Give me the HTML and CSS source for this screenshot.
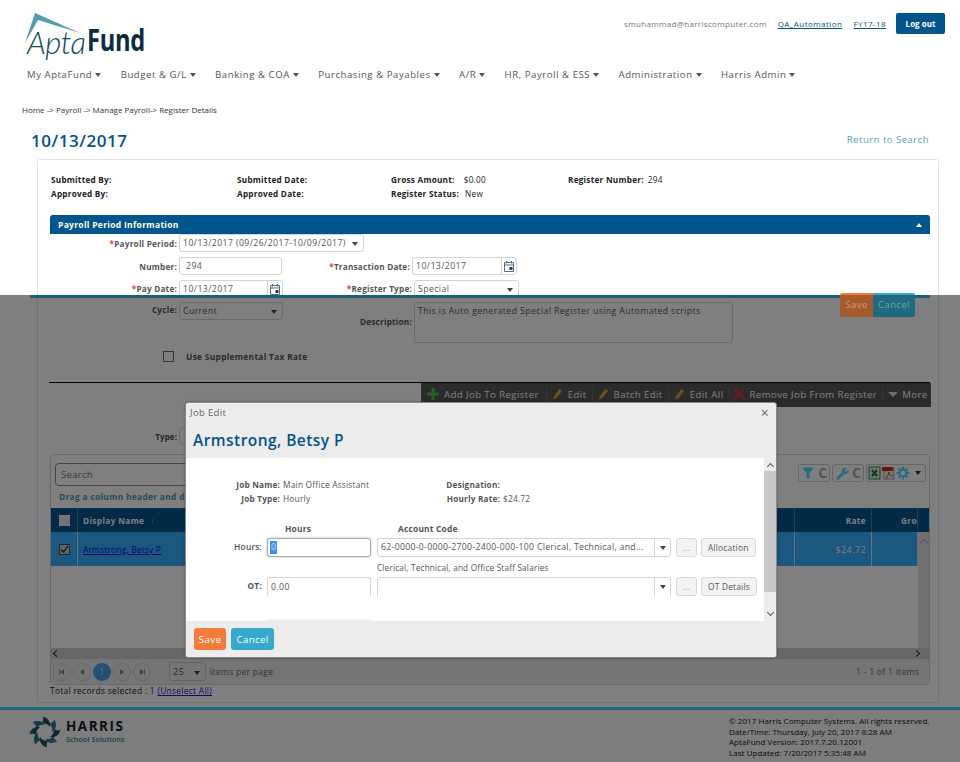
FILE: index.html
```html
<!DOCTYPE html>
<html lang="en">
<head>
<meta charset="utf-8">
<title>Register Details</title>
<link rel="stylesheet" href="styles.css">
</head>
<body>
<div class="page">
  <header class="top">
    <div class="logo">
      <svg class="roof" width="60" height="36" viewBox="0 0 60 36"><path d="M1 32 L11 2 L56 22 L14 9 Z" fill="#4f9fb0"/></svg>
      <span class="apta">Apta</span><span class="fund">Fund</span>
    </div>
    <div class="account">
      <span class="email">smuhammad@harriscomputer.com</span>
      <a class="acct-link">QA_Automation</a>
      <a class="acct-link">FY17-18</a>
      <button class="logout">Log out</button>
    </div>
  </header>
  <nav class="nav">
    <span class="nav-item">My AptaFund<i class="caret"></i></span>
    <span class="nav-item">Budget &amp; G/L<i class="caret"></i></span>
    <span class="nav-item">Banking &amp; COA<i class="caret"></i></span>
    <span class="nav-item">Purchasing &amp; Payables<i class="caret"></i></span>
    <span class="nav-item">A/R<i class="caret"></i></span>
    <span class="nav-item">HR, Payroll &amp; ESS<i class="caret"></i></span>
    <span class="nav-item">Administration<i class="caret"></i></span>
    <span class="nav-item">Harris Admin<i class="caret"></i></span>
  </nav>
  <div class="crumbs">Home -&gt; Payroll -&gt; Manage Payroll-&gt; Register Details</div>
  <div class="title-row">
    <h1>10/13/2017</h1>
    <a class="return">Return to Search</a>
  </div>

  <main class="card">
    <div class="summary">
      <div><b>Submitted By:</b></div>
      <div><b>Submitted Date:</b></div>
      <div><b>Gross Amount:</b><span class="val gross">$0.00</span></div>
      <div><b>Register Number:</b><span class="val">294</span></div>
      <div><b>Approved By:</b></div>
      <div><b>Approved Date:</b></div>
      <div><b>Register Status:</b><span class="val status">New</span></div>
      <div></div>
    </div>
    <div class="section-head"><span>Payroll Period Information</span><i class="caret-up"></i></div>

    <div class="frow r1">
      <label><em>*</em>Payroll Period:</label>
      <div class="select w185 wide">10/13/2017 (09/26/2017-10/09/2017)<i class="caret dark"></i></div>
    </div>
    <div class="frow r2">
      <label>Number:</label>
      <div class="input w103 pad">294</div>
      <label><em>*</em>Transaction Date:</label>
      <div class="date w105">10/13/2017<span class="cal"><svg width="12" height="12" viewBox="0 0 12 12"><path d="M1.5 2.5h9v9h-9z M1.5 5h9" fill="none" stroke="#4f6f85"/><path d="M3.5 1v2.5M8.5 1v2.5" stroke="#4f6f85"/><rect x="6.5" y="7" width="3" height="3" fill="#335"/></svg></span></div>
    </div>
    <div class="frow r3">
      <label><em>*</em>Pay Date:</label>
      <div class="date w104">10/13/2017<span class="cal"><svg width="12" height="12" viewBox="0 0 12 12"><path d="M1.5 2.5h9v9h-9z M1.5 5h9" fill="none" stroke="#4f6f85"/><path d="M3.5 1v2.5M8.5 1v2.5" stroke="#4f6f85"/><rect x="6.5" y="7" width="3" height="3" fill="#335"/></svg></span></div>
      <label class="lbl-rt"><em>*</em>Register Type:</label>
      <div class="select w105 shift">Special<i class="caret dark"></i></div>
    </div>
    <div class="frow r4">
      <label>Cycle:</label>
      <div class="select w104">Current<i class="caret dark"></i></div>
      <label class="lbl-desc">Description:</label>
      <div class="textarea shift">This is Auto generated Special Register using Automated scripts</div>
    </div>
    <div class="supp"><span class="check"></span><b>Use Supplemental Tax Rate</b></div>

    <div class="rule"></div>
    <div class="toolbar-wrap">
      <div class="toolbar">
        <span class="tb first"><svg width="12" height="12" viewBox="0 0 12 12"><path d="M4.500 0h3v4.500h4.500v3h-4.500v4.500h-3v-4.500h-4.500v-3h4.500z" fill="#4fc04f"/></svg>Add Job To Register</span>
        <span class="tb"><svg class="pencil" width="11" height="12" viewBox="0 0 11 12"><path d="M1 11.500l1-3.500 5.500-7 2.500 2-5.500 7z" fill="#e0a040"/></svg>Edit</span>
        <span class="tb"><svg class="pencil" width="11" height="12" viewBox="0 0 11 12"><path d="M1 11.500l1-3.500 5.500-7 2.500 2-5.500 7z" fill="#e0a040"/></svg>Batch Edit</span>
        <span class="tb near"><svg class="pencil" width="11" height="12" viewBox="0 0 11 12"><path d="M1 11.500l1-3.500 5.500-7 2.500 2-5.500 7z" fill="#e0a040"/></svg>Edit All</span>
        <span class="tb"><svg width="12" height="12" viewBox="0 0 12 12"><path d="M1 1l10 10M11 1L1 11" stroke="#f02848" stroke-width="2"/></svg>Remove Job From Register</span>
        <span class="tb last"><i class="caret big"></i>More</span>
      </div>
    </div>

    <div class="type-row"><label>Type:</label><div class="select w104"></div></div>

    <section class="grid">
      <div class="grid-tools">
        <div class="search">Search</div>
        <div class="tool-groups">
          <span class="tg"><svg width="14" height="14" viewBox="0 0 14 14"><path d="M1 1.500h12l-4.500 5.500v6l-3-1.500v-4.500z" fill="#50d8ff"/></svg><span class="redo">C</span></span>
          <span class="tg"><svg width="14" height="14" viewBox="0 0 14 14"><path d="M1 12l6-6c-1-3 2-5 5-4l-2.500 2.500 1.500 1.500 2.500-2.500c.5 3-2 5.500-4.500 4.500l-6 6z" fill="#50d8ff"/></svg><span class="redo">C</span></span>
          <span class="tg tight"><svg width="13" height="14" viewBox="0 0 13 14"><rect x="1" y="1" width="11" height="12" fill="#d8ecd8" stroke="#2a8a4a"/><path d="M4 4l5 6M9 4l-5 6" stroke="#1a7a3a" stroke-width="2"/></svg><svg class="pdf" width="13" height="14" viewBox="0 0 13 14"><rect x="2" y="2" width="10" height="11" fill="#eee" stroke="#999"/><rect x="0" y="1" width="11" height="4" fill="#e02020"/><path d="M4 12c2-3 3-4 3-6 0 3 2 4 4 4" fill="none" stroke="#d03030"/></svg><svg width="14" height="14" viewBox="0 0 14 14"><circle cx="7" cy="7" r="3.500" fill="none" stroke="#50d8ff" stroke-width="2.400"/><path d="M7 .5v3M7 10.500v3M.5 7h3M10.500 7h3M2.400 2.400l2.100 2.100M9.500 9.500l2.100 2.100M11.600 2.400l-2.100 2.100M4.500 9.500l-2.100 2.100" stroke="#50d8ff" stroke-width="2"/></svg><i class="caret navy"></i></span>
        </div>
      </div>
      <div class="hint">Drag a column header and dr</div>
      <div class="ghead">
        <div class="gc cb"><span class="check light"></span></div>
        <div class="gc name">Display Name <span class="arrow">↑</span></div>
        <div class="gc num">Rate</div>
        <div class="gc clip">Gross</div>
        <div class="gc"></div>
      </div>
      <div class="gbody">
        <div class="gmain">
          <div class="grow">
            <div class="gc cb"><span class="check on"><svg width="9" height="9" viewBox="0 0 9 9"><path d="M1 4.500l2.500 2.500 4.500-6" fill="none" stroke="#333" stroke-width="1.300"/></svg></span></div>
            <div class="gc name"><a class="emp">Armstrong, Betsy P</a></div>
            <div class="gc num">$24.72</div>
            <div class="gc"></div>
          </div>
        </div>
        <div class="vscroll"><span class="chev up"></span></div>
      </div>
      <div class="hscroll"><span class="hl"></span><span class="hr"></span></div>
      <div class="pager">
        <span class="pg"><i class="tri l bar"></i></span>
        <span class="pg"><i class="tri l"></i></span>
        <span class="pg active">1</span>
        <span class="pg"><i class="tri r"></i></span>
        <span class="pg"><i class="tri r bar"></i></span>
        <div class="psize">25<i class="caret dark"></i></div>
        <span class="ptext">items per page</span>
        <span class="pcount">1 - 1 of 1 items</span>
      </div>
    </section>
    <div class="total">Total records selected : 1 <a>(Unselect All)</a></div>
  </main>

  <footer class="foot">
    <div class="hlogo">
      <svg width="32" height="32" viewBox="-16 -16 32 32">
        <defs><path id="blade" d="M-2 -15.500 C3 -14 6 -10 5 -5 C3 -8 0 -9 -3 -9 C-1.500 -11 -1.500 -13 -2 -15.500Z"/></defs>
        <g fill="#1f4f5c"><use href="#blade"/><use href="#blade" transform="rotate(90)"/><use href="#blade" transform="rotate(180)"/><use href="#blade" transform="rotate(270)"/></g>
        <g fill="#27788a"><use href="#blade" transform="rotate(45)"/><use href="#blade" transform="rotate(135)"/><use href="#blade" transform="rotate(225)"/><use href="#blade" transform="rotate(315)"/></g>
      </svg>
      <div class="hwords"><b>HARRIS</b><span>School Solutions</span></div>
    </div>
    <div class="legal">
      <div>© 2017 Harris Computer Systems. All rights reserved.</div>
      <div>Date/Time: Thursday, July 20, 2017 8:28 AM</div>
      <div>AptaFund Version: 2017.7.20.12001</div>
      <div>Last Updated: 7/20/2017 5:35:48 AM</div>
    </div>
  </footer>

  <div class="overlay"></div>
  <div class="stick-bar"></div>
  <div class="stick-btns"><span class="sb-save">Save</span><span class="sb-cancel">Cancel</span></div>

  <div class="modal">
    <div class="m-head">
      <div class="m-title"><span>Job Edit</span><span class="close">×</span></div>
      <h2>Armstrong, Betsy P</h2>
    </div>
    <div class="m-body">
      <div class="m-content">
        <div class="info">
          <b>Job Name:</b><span>Main Office Assistant</span><b>Designation:</b><span></span>
          <b>Job Type:</b><span>Hourly</span><b>Hourly Rate:</b><span>$24.72</span>
        </div>
        <div class="alloc heads">
          <span></span><b class="ctr">Hours</b><b class="acct">Account Code</b>
        </div>
        <div class="alloc">
          <label>Hours:</label>
          <div class="input focus"><span class="sel">0</span></div>
          <div class="combo"><span class="ctext">62-0000-0-0000-2700-2400-000-100 Clerical, Technical, and...</span><span class="cbtn"><i class="caret dark"></i></span></div>
          <span class="mbtn dots">...</span>
          <span class="mbtn wide-btn">Allocation</span>
        </div>
        <div class="acct-desc">Clerical, Technical, and Office Staff Salaries</div>
        <div class="alloc">
          <label class="ot">OT:</label>
          <div class="input cut">0.00</div>
          <div class="combo cut-c"><span class="ctext"></span><span class="cbtn"><i class="caret dark"></i></span></div>
          <span class="mbtn dots">...</span>
          <span class="mbtn wide-btn">OT Details</span>
        </div>
        <div class="next-input"></div>
      </div>
      <div class="m-scroll">
        <span class="chev up dark"></span>
        <span class="thumb"></span>
        <span class="chev down dark"></span>
      </div>
    </div>
    <div class="m-foot">
      <button class="save">Save</button>
      <button class="cancel">Cancel</button>
    </div>
  </div>
</div>
</body>
</html>
```

FILE: styles.css
```css
* { box-sizing: border-box; }
html, body { margin: 0; padding: 0; background: #fff; }
body { font-family: "Open Sans", "Liberation Sans", sans-serif; font-size: 9px; color: #333; }
.page { position: relative; width: 960px; height: 762px; overflow: hidden; }
b { font-weight: 700; }
i { font-style: normal; }
a { cursor: pointer; }

.top { display: flex; justify-content: space-between; height: 64px; }
.logo { position: relative; margin: 25px 0 0 27px; height: 32px; display: flex; align-items: flex-end; color: #0a2c3e; line-height: 30px; }
.roof { position: absolute; left: -3px; top: -14px; }
.apta { font-family: Lato, sans-serif; font-style: italic; font-weight: 300; font-size: 31px; color: #0c4a5c; letter-spacing: -.5px; }
.fund { display: inline-block; font-family: "Open Sans", sans-serif; font-weight: 700; font-size: 30px; margin-left: 1px; letter-spacing: -.4px; position: relative; top: -2px; transform: scaleX(.79); transform-origin: left center; }
.account { display: flex; align-items: center; height: 21px; margin: 13px 15px 0 0; font-size: 8px; }
.email { color: #777; letter-spacing: .34px; }
.acct-link { margin-left: 11px; color: #00558c; text-decoration: underline; letter-spacing: .45px; }
.logout { margin-left: 10px; width: 49px; height: 21px; padding: 0; border: 0; border-radius: 2px; background: #00558c; color: #fff; font: 700 8px "Open Sans", sans-serif; }

.nav { display: flex; padding-left: 27px; height: 20px; align-items: center; font-size: 9.600px; color: #555; letter-spacing: .55px; }
.nav-item { margin-right: 19.400px; white-space: nowrap; }
.caret { display: inline-block; width: 0; height: 0; margin-left: 3px; vertical-align: 1px; border: 3px solid transparent; border-top: 4px solid #555; border-bottom: 0; }
.caret.dark { border-top-color: #444; }
.caret.navy { border-top-color: #334; margin: 0 3px 0 4px; }
.caret.big { border-width: 5px 5px 0; border-top-color: #ddd; margin: 0 2px 0 0; vertical-align: 0; }
.crumbs { margin-top: 20px; padding-left: 22px; height: 12px; line-height: 12px; font-size: 8px; color: #333; }
.title-row { display: flex; justify-content: space-between; padding: 13px 31px 0; height: 43px; }
h1 { margin: 0; font-size: 17px; line-height: 23px; font-weight: 600; color: #00558c; letter-spacing: .55px; }
.return { margin-top: 4px; font-size: 9.600px; line-height: 14px; color: #4aa6c6; letter-spacing: .45px; }

.card { width: 902px; height: 544px; margin-left: 37px; padding: 0 8px 0 12px; border: 1px solid #e2e2e2; border-radius: 3px; }
.summary { display: grid; grid-template-columns: 186px 154px 177px 1fr; grid-auto-rows: 14px; margin: 13px 0 0 1px; font-size: 8.200px; line-height: 14px; color: #222; }
.summary b { letter-spacing: .25px; }
.val { margin-left: 4px; letter-spacing: .3px; }
.val.gross { margin-left: 9px; }
.val.status { margin-left: 6px; }
.section-head { display: flex; justify-content: space-between; align-items: center; width: 880px; height: 19px; margin-top: 14px; padding: 0 8px; border-radius: 3px 3px 0 0; background: #00558c; color: #fff; font-weight: 700; font-size: 8.500px; letter-spacing: .3px; }
.caret-up { width: 0; height: 0; border: 3px solid transparent; border-bottom: 4px solid #fff; border-top: 0; }

.frow { display: grid; grid-template-columns: 127px 131px 102px 1fr; column-gap: 0; align-items: center; }
.frow label { text-align: right; font-weight: 700; font-size: 8.200px; color: #555; letter-spacing: .22px; white-space: nowrap; }
.frow label em { font-style: normal; color: #e8403a; }
.r1 { height: 18px; margin-top: 0; }
.r2 { height: 18px; margin-top: 5px; }
.r3 { height: 19px; margin-top: 4px; }
.r4 { height: 41px; margin-top: 4px; align-items: start; }
.frow > div { margin-left: 2px; }
.select, .input, .date, .textarea, .psize { position: relative; height: 18px; line-height: 17px; border: 1px solid #d4d4d4; border-radius: 3px; background: #fff; font-size: 8.700px; color: #555; padding-left: 3px; letter-spacing: .42px; white-space: nowrap; }
.r1 .select { grid-column: 2 / 4; }
.select .caret { position: absolute; right: 5px; top: 7px; margin: 0; }
.w185 { width: 185px; }
.w103 { width: 103px; }
.w104 { width: 104px; }
.w105 { width: 105px; }
.pad { padding-left: 6px; }
.date .cal { position: absolute; right: 0; top: 0; bottom: 0; width: 15px; display: flex; align-items: center; justify-content: center; border-left: 1px solid #d4d4d4; }
.frow > .shift { margin-left: 4px; }
.frow .lbl-rt { margin-right: -2px; }
.frow .lbl-desc { margin: 14px -2px 0 0; }
.r4 label:first-child { margin-top: 2px; }
.textarea { width: 319px; height: 41px; }
.supp { display: flex; align-items: center; height: 12px; margin: 7px 0 0 113px; font-size: 8.400px; color: #555; letter-spacing: .3px; }
.check { display: inline-flex; align-items: center; justify-content: center; width: 11px; height: 11px; margin-right: 12px; border: 1px solid #666; background: #fff; }
.rule { width: 881px; height: 1px; margin: 20px 0 0 -1px; background: #000; }
.toolbar-wrap { display: flex; justify-content: flex-end; margin-right: -1px; }
.toolbar { display: flex; align-items: center; width: 510px; height: 24px; background: #565656; color: #fff; font-size: 9.600px; letter-spacing: .42px; padding-left: 6px; }
.tb { display: flex; align-items: center; gap: 5px; height: 100%; padding: 0 6px 2px 0; margin-right: 5px; position: relative; white-space: nowrap; }
.tb.first { padding-right: 8px; }
.tb.near { margin-right: 3px; }
.tb::after { content: ""; position: absolute; right: 0; top: 4px; bottom: 4px; width: 1px; background: #6c6c6c; }
.tb.last::after { display: none; }
.tb.last { gap: 2px; }

.type-row { display: grid; grid-template-columns: 127px 1fr; margin-top: 20px; height: 18px; align-items: center; }
.type-row label { text-align: right; font-weight: 700; font-size: 8.200px; color: #555; }
.type-row .select { margin-left: 2px; }
.grid { width: 880px; height: 231px; margin-top: 9px; border: 1px solid #d0d0d0; border-radius: 4px; display: flex; flex-direction: column; }
.grid-tools { display: flex; justify-content: space-between; height: 35px; padding: 8px 3px 0 4px; }
.search { width: 200px; height: 23px; line-height: 21px; padding-left: 5px; border: 1px solid #888; border-radius: 4px; font-size: 9.500px; color: #777; letter-spacing: .3px; }
.tool-groups { display: flex; gap: 2px; height: 18px; margin-top: 1px; }
.tg { display: flex; align-items: center; gap: 3px; padding: 0 2px; border: 1px solid #ccc; border-radius: 3px; }
.tg.tight { gap: 1px; padding: 0 1px; }
.redo { font-size: 14px; line-height: 14px; font-weight: 700; color: #aaa; }
.hint { height: 18px; padding-left: 8px; line-height: 13px; font-weight: 700; color: #4a94b8; font-size: 8.300px; letter-spacing: .35px; white-space: nowrap; }
.ghead, .grow { display: grid; grid-template-columns: 27px 717px 77px 46px 1fr; }
.grow { grid-template-columns: 27px 717px 77px 46px; height: 34px; background: #36aeff; color: #fff; }
.ghead { height: 24px; background: #00558c; color: #fff; font-weight: 700; font-size: 8.200px; letter-spacing: .4px; border-top: 1px solid #0a6aa0; }
.gc { display: flex; align-items: center; padding: 0 5px; border-right: 1px solid #3d80a8; overflow: hidden; white-space: nowrap; }
.grow .gc { border-right-color: #cfe4f4; font-size: 9px; letter-spacing: .4px; }
.gc.cb { justify-content: center; padding: 0; }
.gc.cb .check { margin: 0; }
.gc.num { justify-content: flex-end; }
.gc.clip { padding-left: 29px; padding-right: 0; }
.ghead .gc:last-child { border: 0; }
.arrow { margin-left: 6px; color: #9fc6dd; }
.check.light { background: #e4e4e4; border-color: #eee; }
.check.on { background: #b8cfe0; border-color: #444; }
.grow .emp { color: #0a0acc; text-decoration: underline; font-size: 8.400px; letter-spacing: .2px; }
.gbody { display: flex; height: 116px; }
.gmain { flex: 1; }
.vscroll { width: 13px; background: #e2e2e2; display: flex; justify-content: center; padding-top: 8px; }
.chev { display: block; width: 6px; height: 6px; border-left: 1.500px solid #aaa; border-top: 1.500px solid #aaa; transform: rotate(45deg); }
.chev.dark { border-color: #555; }
.chev.down { transform: rotate(225deg); }
.hscroll { display: flex; justify-content: space-between; align-items: center; height: 11px; padding: 0 10px 0 3px; background: #cfcfcf; }
.hl, .hr { width: 5px; height: 5px; border-left: 1.500px solid #222; border-top: 1.500px solid #222; transform: rotate(-45deg); }
.hr { transform: rotate(135deg); }
.pager { display: flex; align-items: center; flex: 1; padding: 0 10px 0 2px; background: #ebebeb; border-radius: 0 0 4px 4px; gap: 2px; font-size: 8.500px; color: #666; letter-spacing: .3px; }
.pg { display: flex; align-items: center; justify-content: center; width: 18px; height: 18px; border: 1px solid #ccc; border-radius: 50%; }
.pg.active { background: #3ea4e8; border-color: #3ea4e8; color: #ddd; }
.tri { display: block; width: 0; height: 0; border: 3px solid transparent; position: relative; }
.tri.l { border-right: 4px solid #888; border-left: 0; }
.tri.r { border-left: 4px solid #888; border-right: 0; }
.tri.bar::after { content: ""; position: absolute; top: -3px; height: 6px; width: 1px; background: #888; }
.tri.l.bar::after { left: -1px; }
.tri.r.bar::after { right: -1px; }
.psize { width: 37px; height: 19px; margin-left: 16px; padding-left: 3px; background: transparent; font-size: 9.200px; line-height: 17px; border-color: #c4c4c4; }
.psize .caret { position: absolute; right: 5px; top: 8px; margin: 0; }
.ptext { margin-left: 2px; }
.pcount { margin-left: auto; }
.total { height: 13px; line-height: 12px; font-size: 8.400px; letter-spacing: .3px; color: #222; }
.total a { color: #1a1acc; text-decoration: underline; }

.foot { display: flex; justify-content: space-between; margin-top: 4px; height: 60px; border-top: 3px solid #36d4fa; background: #fafafa; }
.hlogo { display: flex; align-items: center; gap: 5px; margin: 6px 0 0 29px; height: 32px; }
.hwords { display: flex; flex-direction: column; gap: 1px; }
.hwords b { font-size: 13.500px; line-height: 13px; letter-spacing: 1.500px; color: #12222c; }
.hwords span { font-size: 7.200px; font-weight: 600; line-height: 10px; color: #2b7f92; letter-spacing: .1px; }
.legal { width: 231px; padding-top: 6px; font-size: 8px; line-height: 10.500px; color: #111; letter-spacing: .05px; }

.overlay { position: absolute; left: 0; right: 0; top: 295px; bottom: 0; background: rgba(0,0,0,.5); }
.stick-bar { position: absolute; left: 30px; top: 295px; width: 900px; height: 3px; background: #1d6072; }
.stick-btns { position: absolute; left: 840px; top: 293px; display: flex; height: 24px; font-size: 9.600px; letter-spacing: .4px; border-radius: 2px; overflow: hidden; }
.sb-save { width: 33px; padding-top: 3px; line-height: 17px; text-align: center; background: linear-gradient(#f47b3a 2px, #a55a2c 2px); color: #d89870; }
.sb-cancel { width: 42px; padding-top: 3px; line-height: 17px; text-align: center; background: linear-gradient(#36a9cc 2px, #1f6a80 2px); color: #6aa4b4; }

.modal { position: absolute; left: 185px; top: 402px; width: 592px; height: 256px; display: flex; flex-direction: column; border: 1px solid #8a8a8a; border-radius: 3px; background: #ececec; box-shadow: 0 0 3px rgba(0,0,0,.3); }
.m-head { height: 55px; }
.m-title { display: flex; justify-content: space-between; padding: 2px 7px 0 4px; line-height: 15px; font-size: 9.500px; color: #666; letter-spacing: .35px; }
.close { font-size: 14px; color: #666; }
h2 { margin: 10px 0 0 7px; font-size: 15.500px; line-height: 20px; font-weight: 600; color: #00558c; letter-spacing: .45px; }
.m-body { display: flex; height: 163px; }
.m-content { width: 578px; background: #fff; padding-top: 20px; position: relative; overflow: hidden; font-size: 8.400px; color: #555; letter-spacing: .2px; }
.info { display: grid; grid-template-columns: 94px 165px 55px 1fr; grid-auto-rows: 14px; column-gap: 0; line-height: 14px; }
.info b { text-align: right; white-space: nowrap; font-size: 8.200px; }
.info span { padding-left: 3px; }
.alloc { display: grid; grid-template-columns: 76px 104px 295px 21px auto; column-gap: 5px; align-items: center; justify-content: start; }
.alloc label { text-align: right; font-weight: 600; }
.alloc .ot { font-weight: 700; }
.heads { height: 15px; margin-top: 15px; padding-top: 2px; align-items: start; }
.heads .ctr { padding-left: 18px; }
.heads .acct { padding-left: 22px; }
.alloc .input { height: 19px; padding-left: 3px; margin-top: 2px; }
.input.focus { border-color: #aaa; box-shadow: 0 0 2px rgba(0,0,0,.35); line-height: 17px; padding-left: 2px; }
.sel { display: inline-block; background: #3390ff; padding: 0 1px; color: #cfe2ff; line-height: 13px; }
.combo { display: flex; height: 19px; margin: 2px 0 0 1px; border: 1px solid #d4d4d4; border-radius: 3px; font-size: 8.700px; letter-spacing: .3px; }
.ctext { flex: 1; padding-left: 3px; line-height: 17px; white-space: nowrap; overflow: hidden; }
.cbtn { width: 16px; border-left: 1px solid #d4d4d4; display: flex; align-items: center; justify-content: center; }
.cbtn .caret { margin: 0; }
.mbtn { display: flex; align-items: center; justify-content: center; height: 19px; margin-top: 2px; padding: 0 6px; background: #f3f3f3; border: 1px solid #d8d8d8; border-radius: 3px; color: #555; white-space: nowrap; }
.mbtn.wide-btn { margin-left: -1px; }
.mbtn.dots { padding: 0; color: #999; }
.acct-desc { margin: 3px 0 0 191px; height: 15px; line-height: 15px; font-size: 8.200px; color: #555; }
.input.cut { border-bottom: 0; border-radius: 3px 3px 0 0; line-height: 18px; }
.combo.cut-c { border-bottom: 0; border-radius: 3px 3px 0 0; }
.next-input { position: absolute; left: 81px; top: 161px; width: 104px; height: 2px; background: #f2f2f2; }
.m-scroll { position: relative; flex: 1; display: flex; flex-direction: column; align-items: center; background: #ececec; }
.m-scroll .chev { position: absolute; width: 5px; height: 5px; }
.m-scroll .up { top: 6px; }
.m-scroll .down { bottom: 6px; }
.thumb { position: absolute; top: 13px; left: 0; width: 100%; height: 121px; background: #c9c9c9; }
.m-foot { display: flex; gap: 5px; padding: 7px 0 0 8px; }
.m-foot button { height: 22px; padding: 0; border: 0; border-radius: 3px; color: #fff; font: 9.600px "Open Sans", sans-serif; letter-spacing: .4px; }
.save { width: 32px; background: #f47b3a; }
.cancel { width: 43px; background: #36a9cc; }
```
